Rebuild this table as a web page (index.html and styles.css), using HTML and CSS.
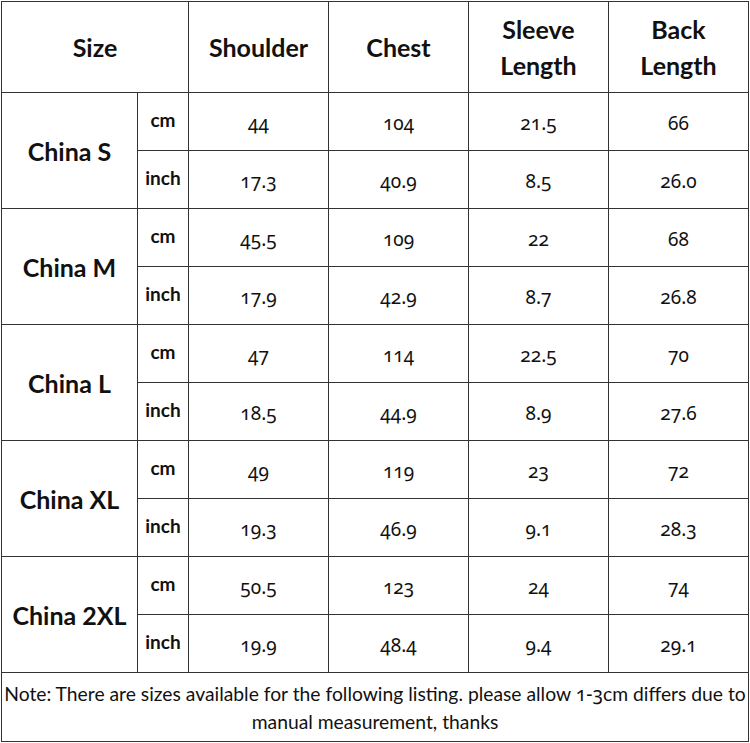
FILE: index.html
```html
<!DOCTYPE html>
<html lang="en">
<head>
<meta charset="utf-8">
<title>Size chart</title>
<link rel="stylesheet" href="styles.css">
</head>
<body>
<div class="chart">
  <div class="cell head span2">Size</div>
  <div class="cell head">Shoulder</div>
  <div class="cell head">Chest</div>
  <div class="cell head">Sleeve<br>Length</div>
  <div class="cell head">Back<br>Length</div>

  <div class="cell size rows2">China S</div>
  <div class="cell unit">cm</div>
  <div class="cell num">44</div>
  <div class="cell num">104</div>
  <div class="cell num">21.5</div>
  <div class="cell num">66</div>
  <div class="cell unit">inch</div>
  <div class="cell num">17.3</div>
  <div class="cell num">40.9</div>
  <div class="cell num">8.5</div>
  <div class="cell num">26.0</div>

  <div class="cell size rows2">China M</div>
  <div class="cell unit">cm</div>
  <div class="cell num">45.5</div>
  <div class="cell num">109</div>
  <div class="cell num">22</div>
  <div class="cell num">68</div>
  <div class="cell unit">inch</div>
  <div class="cell num">17.9</div>
  <div class="cell num">42.9</div>
  <div class="cell num">8.7</div>
  <div class="cell num">26.8</div>

  <div class="cell size rows2">China L</div>
  <div class="cell unit">cm</div>
  <div class="cell num">47</div>
  <div class="cell num">114</div>
  <div class="cell num">22.5</div>
  <div class="cell num">70</div>
  <div class="cell unit">inch</div>
  <div class="cell num">18.5</div>
  <div class="cell num">44.9</div>
  <div class="cell num">8.9</div>
  <div class="cell num">27.6</div>

  <div class="cell size rows2">China XL</div>
  <div class="cell unit">cm</div>
  <div class="cell num">49</div>
  <div class="cell num">119</div>
  <div class="cell num">23</div>
  <div class="cell num">72</div>
  <div class="cell unit">inch</div>
  <div class="cell num">19.3</div>
  <div class="cell num">46.9</div>
  <div class="cell num">9.1</div>
  <div class="cell num">28.3</div>

  <div class="cell size rows2">China 2XL</div>
  <div class="cell unit">cm</div>
  <div class="cell num">50.5</div>
  <div class="cell num">123</div>
  <div class="cell num">24</div>
  <div class="cell num">74</div>
  <div class="cell unit">inch</div>
  <div class="cell num">19.9</div>
  <div class="cell num">48.4</div>
  <div class="cell num">9.4</div>
  <div class="cell num">29.1</div>

  <div class="cell note"><p class="note-text">Note: There are sizes available for the following listing. please allow <span class="digits">1-3</span>cm differs due to manual measurement, thanks</p></div>
</div>
</body>
</html>
```

FILE: styles.css
```css
html, body {
  margin: 0;
  padding: 0;
  background: #ffffff;
}

.chart {
  margin: 1px 0 0 1px;
  width: 748px;
  box-sizing: border-box;
  padding: 1px;
  background: #333333;
  display: grid;
  grid-template-columns: 135px 50px 139px 139px 139px 139px;
  grid-template-rows: 90px repeat(10, 57px) 68px;
  gap: 1px;
  font-family: Lato, "Liberation Sans", sans-serif;
  color: #111111;
}

.cell {
  background: #ffffff;
  display: flex;
  align-items: center;
  justify-content: center;
  text-align: center;
}

.span2 {
  grid-column: span 2;
}

.rows2 {
  grid-row: span 2;
}

.head {
  font-weight: 700;
  font-size: 25px;
  line-height: 36px;
}

.size {
  font-weight: 700;
  font-size: 25px;
}

.unit {
  font-weight: 700;
  font-size: 19px;
  padding-bottom: 4px;
}

.num {
  font-family: "Noto Sans", sans-serif;
  font-variant-numeric: oldstyle-nums;
  font-size: 19px;
  padding-top: 3px;
  box-sizing: border-box;
}

.note {
  grid-column: 1 / -1;
}

.note-text {
  margin: 0;
  font-size: 19.3px;
  line-height: 28px;
  padding: 2px 0 0;
}

.digits {
  font-family: "Noto Sans", sans-serif;
  font-variant-numeric: oldstyle-nums;
}
```
